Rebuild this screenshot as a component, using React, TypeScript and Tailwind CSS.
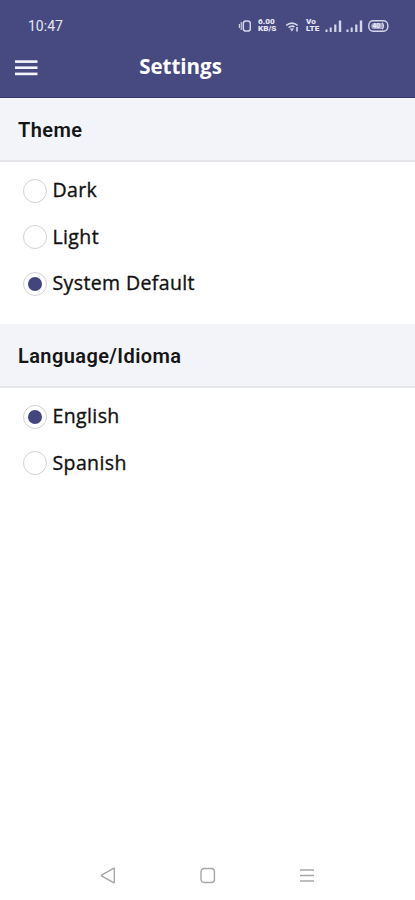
import { useState } from "react";
import clsx from "clsx";

const themes = ["Dark", "Light", "System Default"];
const languages = ["English", "Spanish"];

function Signal() {
  return (
    <svg width="17" height="12" viewBox="0 0 17 12" fill="#d5d6e8">
      <rect x="0.5" y="9.5" width="2" height="2.5" />
      <rect x="4.7" y="7.5" width="2" height="4.5" />
      <rect x="9.2" y="4.5" width="2.2" height="7.5" />
      <rect x="13.8" y="0.5" width="2.4" height="11.5" />
    </svg>
  );
}

function StatusBar() {
  return (
    <div className="flex h-[52px] items-center pl-7 pr-[26px] font-['Roboto',sans-serif] text-[#e6e6f2]">
      <span className="text-[14px] leading-none">10:47</span>
      <div className="ml-auto flex items-center">
        <svg width="13" height="12" viewBox="0 0 13 12" fill="none" stroke="#d5d6e8">
          <rect x="5.3" y="0.9" width="7" height="10.2" rx="2.6" strokeWidth="1.5" />
          <path d="M1.4 4v4M3.2 2v8" strokeWidth="1.1" />
        </svg>
        <div className="ml-[7px] w-[19px] origin-left scale-x-125 text-[6.5px] font-black leading-[7px]">
          <div>6.00</div>
          <div>KB/S</div>
        </div>
        <svg className="ml-2 mt-[2px]" width="14" height="10" viewBox="0 0 14 10" fill="none" stroke="#d5d6e8">
          <path d="M1.2 3.4Q6.9-1.2 12.6 3.4" strokeWidth="1.6" />
          <path d="M3.6 5.6Q6.9 3.1 9.4 5" strokeWidth="1.6" />
          <path d="M4.8 6.6H9L6.9 9.4Z" fill="#d5d6e8" stroke="none" />
          <path d="M12 5v4.5" strokeWidth="1.6" />
        </svg>
        <div className="ml-[7px] w-[13px] origin-left scale-x-125 text-[6.5px] font-black leading-[7px]">
          <div>Vo</div>
          <div>LTE</div>
        </div>
        <div className="ml-[6px] flex gap-1">
          <Signal />
          <Signal />
        </div>
        <svg className="ml-[5px]" width="21" height="12" viewBox="0 0 21 12" fill="none" stroke="#d5d6e8">
          <rect x="0.8" y="0.8" width="19" height="10.4" rx="4.4" strokeWidth="1.4" />
          <rect x="3.3" y="3.1" width="11.5" height="5.8" rx="2.5" fill="#a3a4c8" stroke="none" />
          <path d="M14 2.8q3 3.2 0 6.4" strokeWidth="1.3" />
          <text x="4.6" y="8.4" fontSize="6.5" fontWeight="700" fill="#f0f0f8" stroke="none">
            40
          </text>
        </svg>
      </div>
    </div>
  );
}

function RadioGroup({
  options,
  value,
  onChange,
}: {
  options: string[];
  value: string;
  onChange: (v: string) => void;
}) {
  return (
    <div role="radiogroup" className="pl-[23px] pt-[5.5px]">
      {options.map((o) => (
        <button
          key={o}
          role="radio"
          aria-checked={value === o}
          className="flex h-[46.5px] w-full items-center text-left"
          onClick={() => onChange(o)}
        >
          <span className="flex size-6 items-center justify-center rounded-full border border-[#d2d2d2]">
            <span className={clsx("size-[14px] rounded-full", value === o && "bg-[#43457f]")} />
          </span>
          <span className="ml-[5.5px] pb-[2px] text-[19.5px] leading-none tracking-[0.38px] text-[#111] [-webkit-text-stroke:0.35px_#111]">
            {o}
          </span>
        </button>
      ))}
    </div>
  );
}

function SectionTitle({ children }: { children: string }) {
  return (
    <h2 className="flex h-16 items-center border-b-2 border-[#e5e6ea] bg-[#f2f4f9] pl-[18px] pt-px font-['Roboto',sans-serif] text-[20px] font-semibold tracking-[0.4px] text-[#151515]">
      {children}
    </h2>
  );
}

export default function App() {
  const [theme, setTheme] = useState("System Default");
  const [language, setLanguage] = useState("English");

  return (
    <div className="flex h-screen flex-col bg-white font-['Open_Sans',sans-serif]">
      <header className="h-[98px] border-b border-[#35356f] bg-[#474a81]">
        <StatusBar />
        <div className="relative flex h-[29px] items-center justify-center pr-[54px]">
          <button aria-label="Menu" className="absolute left-[15px] top-[8px]">
            <svg width="23" height="16" viewBox="0 0 23 16" fill="#f4f4fb">
              <rect y="0.3" width="22.5" height="2.6" />
              <rect y="6.4" width="22.5" height="2.6" />
              <rect y="12.6" width="22.5" height="2.6" />
            </svg>
          </button>
          <h1 className="text-[20.5px] font-bold leading-none text-white">Settings</h1>
        </div>
      </header>

      <section className="h-[226px]">
        <SectionTitle>Theme</SectionTitle>
        <RadioGroup options={themes} value={theme} onChange={setTheme} />
      </section>
      <section>
        <SectionTitle>Language/Idioma</SectionTitle>
        <RadioGroup options={languages} value={language} onChange={setLanguage} />
      </section>

      <nav className="mt-auto flex h-[50px] items-center gap-[84px] pl-[99px]">
        <svg width="17" height="17" viewBox="0 0 17 17" fill="none" stroke="#a6a6a6" strokeWidth="1.4">
          <path d="M15.3 1.7v13.6q0 .8-.8.4L3 9.2q-1-.7 0-1.4L14.5 1.3q.8-.4.8.4Z" />
        </svg>
        <svg width="16" height="17" viewBox="0 0 16 17" fill="none" stroke="#a6a6a6" strokeWidth="1.4">
          <rect x="1" y="1.5" width="13.4" height="14" rx="3.2" />
        </svg>
        <svg width="16" height="17" viewBox="0 0 16 17" stroke="#a6a6a6" strokeWidth="1.3">
          <path d="M0 3h14M0 8.5h14M0 14h14" />
        </svg>
      </nav>
    </div>
  );
}
